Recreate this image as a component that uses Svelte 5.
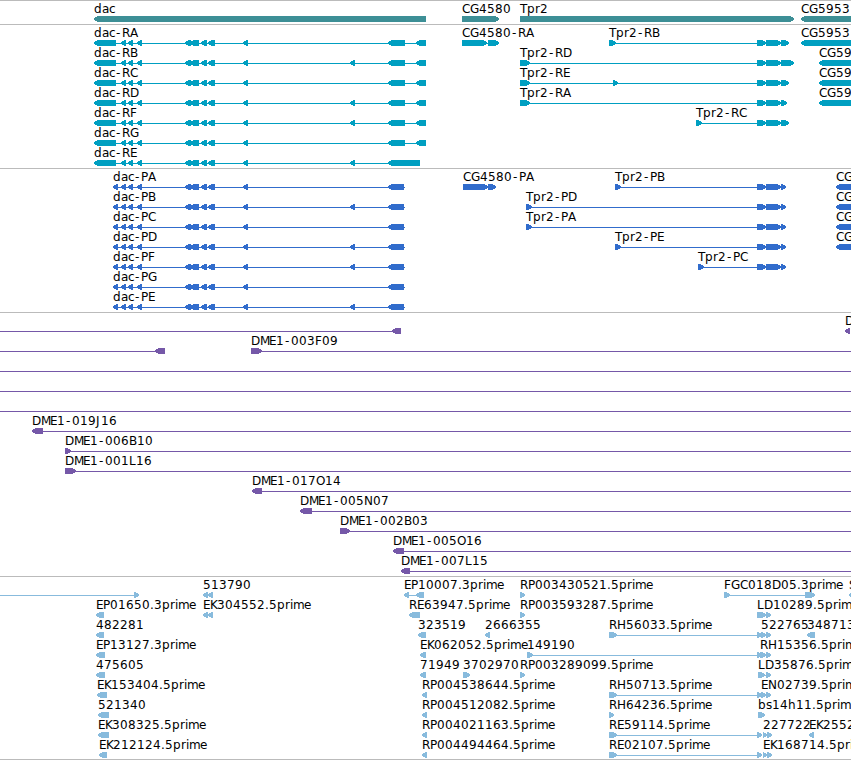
<script lang="ts">
  // Genome browser tracks. Each track is a stack of 20px rows; a feature
  // in a row has a label, a connecting line and directional blocks.

  type Block = [number, number];

  interface Feature {
    label: string;
    dir: 'fwd' | 'rev';
    blocks: Block[];
    from: number;
    to: number;
  }

  interface Track {
    name: string;
    height: number;
    rows: Feature[][];
  }

  const WIDTH = 851;
  const ROW = 20;
  const HEAD = 4;

  // The line spans the blocks unless it runs past them (or off the view).
  function feature(dir: 'fwd' | 'rev', label: string, blocks: Block[], from?: number, to?: number): Feature {
    return {
      label,
      dir,
      blocks,
      from: from ?? blocks[0][0],
      to: to ?? blocks[blocks.length - 1][1],
    };
  }

  const fwd = (label: string, blocks: Block[], from?: number, to?: number) =>
    feature('fwd', label, blocks, from, to);
  const rev = (label: string, blocks: Block[], from?: number, to?: number) =>
    feature('rev', label, blocks, from, to);
  const through = () => feature('fwd', '', [], 0, WIDTH);

  const middle: Block[] = [
    [121, 126], [128, 133], [137, 142], [185, 191], [190, 199],
    [201, 207], [208, 215], [243, 248],
  ];
  const extra: Block = [350, 355];
  const tail: Block[] = [[757, 766], [766, 781]];

  function dacR(id: string, hasExtra: boolean, end: Block[] = [[388, 405], [416, 426]]) {
    return rev('dac-R' + id, [[94, 116], ...middle, ...(hasExtra ? [extra] : []), ...end]);
  }

  function dacP(id: string, hasExtra: boolean) {
    return rev('dac-P' + id, [[113, 118], ...middle, ...(hasExtra ? [extra] : []), [388, 404]], 113, 405);
  }

  function tpr(id: string, start: Block[], end: number) {
    return fwd('Tpr2-' + id, [...start, ...tail, [781, end]]);
  }

  const tracks: Track[] = [
    {
      name: 'gene',
      height: 24,
      rows: [
        [
          rev('dac', [[94, 426]]),
          fwd('CG4580', [[462, 499]]),
          fwd('Tpr2', [[520, 794]]),
          rev('CG5953', [[801, 860]]),
        ],
      ],
    },
    {
      name: 'transcript',
      height: 144,
      rows: [
        [
          dacR('A', false),
          fwd('CG4580-RA', [[462, 487], [488, 499]]),
          tpr('RB', [[609, 616]], 789),
          rev('CG5953', [[801, 860]]),
        ],
        [dacR('B', true), tpr('RD', [[520, 530]], 794), rev('CG5953', [[819, 860]])],
        [dacR('C', false), tpr('RE', [[520, 530], [613, 618]], 789), rev('CG5953', [[819, 860]])],
        [dacR('D', true), tpr('RA', [[520, 530]], 787), rev('CG5953', [[819, 860]])],
        [dacR('F', true), tpr('RC', [[696, 702]], 789)],
        [dacR('G', false)],
        [dacR('E', true, [[388, 420]])],
      ],
    },
    {
      name: 'protein',
      height: 144,
      rows: [
        [
          dacP('A', false),
          fwd('CG4580-PA', [[463, 488], [488, 496]]),
          tpr('PB', [[615, 621]], 786),
          rev('CG5953', [[836, 860]]),
        ],
        [dacP('B', true), tpr('PD', [[526, 532]], 786), rev('CG5953', [[836, 860]])],
        [dacP('C', false), tpr('PA', [[526, 532]], 786), rev('CG5953', [[836, 860]])],
        [dacP('D', true), tpr('PE', [[615, 621]], 786), rev('CG5953', [[836, 860]])],
        [dacP('F', true), tpr('PC', [[698, 704]], 786)],
        [dacP('G', false)],
        [dacP('E', true)],
      ],
    },
    {
      name: 'clone',
      height: 264,
      rows: [
        [rev('', [[392, 401]], 0), rev('DME1', [[845, 850]])],
        [rev('', [[155, 165]], 0), fwd('DME1-003F09', [[251, 262]], 251, WIDTH)],
        [through()],
        [through()],
        [through()],
        [rev('DME1-019J16', [[32, 43]], 32, WIDTH)],
        [fwd('DME1-006B10', [[65, 71]], 65, WIDTH)],
        [fwd('DME1-001L16', [[65, 76]], 65, WIDTH)],
        [rev('DME1-017O14', [[252, 262]], 252, WIDTH)],
        [rev('DME1-005N07', [[300, 312]], 300, WIDTH)],
        [fwd('DME1-002B03', [[340, 350]], 340, WIDTH)],
        [rev('DME1-005O16', [[393, 404]], 393, WIDTH)],
        [rev('DME1-007L15', [[401, 410]], 401, WIDTH)],
      ],
    },
    {
      name: 'est',
      height: 183,
      rows: [
        [
          fwd('', [[134, 139]], 0),
          rev('513790', [[203, 208], [208, 213]]),
          rev('EP10007.3prime', [[404, 409], [416, 424]]),
          fwd('RP003430521.5prime', [[520, 525]]),
          fwd('FGC018D05.3prime', [[724, 730], [805, 815]]),
          rev('S', [[849, 857]]),
        ],
        [
          rev('EP01650.3prime', [[96, 104]]),
          rev('EK304552.5prime', [[203, 208], [208, 213]]),
          rev('RE63947.5prime', [[409, 420]]),
          fwd('RP003593287.5prime', [[520, 525]]),
          fwd('LD10289.5prime', [[757, 766], [766, 771]]),
        ],
        [
          rev('482281', [[96, 104]]),
          rev('323519', [[418, 426]]),
          rev('2666355', [[485, 490]]),
          fwd('RH56033.5prime', [[609, 617], [757, 762]]),
          fwd('522765', [[761, 766], [766, 771]]),
          rev('348713', [[807, 815]]),
        ],
        [
          rev('EP13127.3prime', [[96, 105]]),
          rev('EK062052.5prime', [[420, 426]]),
          fwd('149190', [[527, 533], [757, 762]]),
          fwd('RH15356.5prime', [[760, 766], [766, 771]]),
        ],
        [
          rev('475605', [[96, 105]]),
          rev('71949', [[420, 426]]),
          fwd('3702970', [[463, 470]]),
          fwd('RP003289099.5prime', [[520, 525]]),
          fwd('LD35876.5prime', [[758, 765], [766, 771]]),
        ],
        [
          rev('EK153404.5prime', [[97, 107]]),
          rev('RP004538644.5prime', [[422, 427]]),
          fwd('RH50713.5prime', [[609, 617], [757, 762]]),
          fwd('EN02739.5prime', [[761, 766], [766, 771]]),
        ],
        [
          rev('521340', [[98, 109]]),
          rev('RP004512082.5prime', [[422, 427]]),
          fwd('RH64236.5prime', [[609, 614]]),
          fwd('bs14h11.5prime', [[758, 765]]),
        ],
        [
          rev('EK308325.5prime', [[98, 109]]),
          rev('RP004021163.5prime', [[422, 427]]),
          fwd('RE59114.5prime', [[609, 617], [757, 762]]),
          fwd('227722', [[763, 767], [767, 772]]),
          rev('EK2552', [[809, 814]]),
        ],
        [
          rev('EK212124.5prime', [[99, 107]]),
          rev('RP004494464.5prime', [[422, 427]]),
          fwd('RE02107.5prime', [[609, 617], [757, 762]]),
          fwd('EK168714.5prime', [[763, 767], [767, 772]]),
        ],
      ],
    },
  ];

  // Whole-pixel advances; anything not listed is 8 wide.
  const advances: Record<string, number> = {
    '-': 7, '.': 4, a: 7, c: 6, e: 7, i: 3, m: 11, r: 5, s: 6,
    A: 9, D: 9, E: 7, F: 7, G: 9, H: 9, J: 5, K: 7, L: 7, M: 9,
    N: 9, O: 9, P: 7, T: 7,
  };

  function glyphs(label: string, start: number): string {
    let x = start;
    return [...label]
      .map((c) => {
        // the hyphen sits in the middle of its wide slot
        const at = c === '-' ? x + 1 : x;
        x += advances[c] ?? 8;
        return at;
      })
      .join(' ');
  }

  // Blunt-tipped block, 6px tall, pointing along the strand.
  function arrow([a, b]: Block, dir: 'fwd' | 'rev'): string {
    return dir === 'rev'
      ? `M${a} 18.4L${a + HEAD} 16H${b}V22H${a + HEAD}L${a} 19.8Z`
      : `M${b} 18.4L${b - HEAD} 16H${a}V22H${b - HEAD}L${b} 19.8Z`;
  }
</script>

<main>
  {#each tracks as track (track.name)}
    <section class="track {track.name}" style:height="{track.height}px">
      {#each track.rows as row}
        <svg class="row" width={WIDTH} height={ROW + 4} viewBox="0 0 {WIDTH} {ROW + 4}">
          {#each row as f}
            <rect class="line" x={f.from} y="19" width={f.to - f.from} height="1" />
            {#each f.blocks as block}
              <path d={arrow(block, f.dir)} />
            {/each}
            {#if f.label}
              <text x={glyphs(f.label, f.from)} y="13">{f.label}</text>
            {/if}
          {/each}
        </svg>
      {/each}
    </section>
  {/each}
</main>

<style>
  :global(body) {
    background: #fff;
    overflow: hidden;
  }

  main {
    width: 851px;
    height: 760px;
    box-sizing: border-box;
    overflow: hidden;
    border-bottom: 1px solid #bbb;
  }

  .track {
    box-sizing: border-box;
    background: linear-gradient(#bbb, #bbb) top / 100% 1px no-repeat;
  }

  .row {
    display: block;
    margin-bottom: -4px;
    shape-rendering: crispEdges;
  }

  text {
    font-family: 'DejaVu Sans', sans-serif;
    font-size: 12px;
    fill: #000;
  }

  .gene {
    fill: #3d8f96;
  }

  .transcript {
    fill: #009fc1;
  }

  .protein {
    fill: #316ccc;
  }

  .clone {
    fill: #7558a8;
  }

  .est {
    fill: #88bbdd;
  }
</style>
